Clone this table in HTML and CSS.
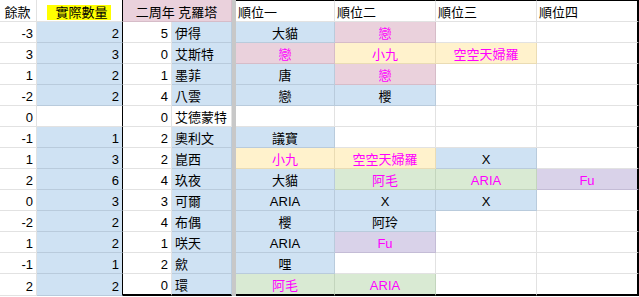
FILE: index.html
```html
<!DOCTYPE html>
<html lang="zh-Hant">
<head>
<meta charset="utf-8">
<link rel="stylesheet" href="styles.css">
</head>
<body>
<div class="sheet">
  <div class="bar"></div>

  <div class="c ctr hd">餘款</div>
  <div class="c ctr hd kb"><span class="hl">實際數量</span></div>
  <div class="c ctr hd pk span2">二周年 克羅塔</div>
  <div class="c hd top">順位一</div>
  <div class="c hd top">順位二</div>
  <div class="c hd top">順位三</div>
  <div class="c hd top lastcol">順位四</div>

  <!-- 1 -->
  <div class="c r">-3</div><div class="c r bl kb">2</div><div class="c r">5</div><div class="c bl">伊得</div>
  <div class="c ctr bl">大貓</div><div class="c ctr pk m">戀</div><div class="c"></div><div class="c lastcol"></div>
  <!-- 2 -->
  <div class="c r">3</div><div class="c r bl kb">3</div><div class="c r">0</div><div class="c bl">艾斯特</div>
  <div class="c ctr pk m">戀</div><div class="c ctr yl m">小九</div><div class="c ctr yl m">空空天婦羅</div><div class="c lastcol"></div>
  <!-- 3 -->
  <div class="c r">1</div><div class="c r bl kb">2</div><div class="c r">1</div><div class="c bl">墨菲</div>
  <div class="c ctr bl">唐</div><div class="c ctr pk m">戀</div><div class="c"></div><div class="c lastcol"></div>
  <!-- 4 -->
  <div class="c r">-2</div><div class="c r bl kb">2</div><div class="c r">4</div><div class="c bl">八雲</div>
  <div class="c ctr bl">戀</div><div class="c ctr bl">櫻</div><div class="c"></div><div class="c lastcol"></div>
  <!-- 5 -->
  <div class="c r">0</div><div class="c r kb"></div><div class="c r">0</div><div class="c">艾德蒙特</div>
  <div class="c"></div><div class="c"></div><div class="c"></div><div class="c lastcol"></div>
  <!-- 6 -->
  <div class="c r">-1</div><div class="c r bl kb">1</div><div class="c r">2</div><div class="c bl">奧利文</div>
  <div class="c ctr bl">議寶</div><div class="c"></div><div class="c"></div><div class="c lastcol"></div>
  <!-- 7 -->
  <div class="c r">1</div><div class="c r bl kb">3</div><div class="c r">2</div><div class="c bl">崑西</div>
  <div class="c ctr yl m">小九</div><div class="c ctr yl m">空空天婦羅</div><div class="c ctr bl">X</div><div class="c lastcol"></div>
  <!-- 8 -->
  <div class="c r">2</div><div class="c r bl kb">6</div><div class="c r">4</div><div class="c bl">玖夜</div>
  <div class="c ctr bl">大貓</div><div class="c ctr gr m">阿毛</div><div class="c ctr gr m">ARIA</div><div class="c ctr pu m lastcol">Fu</div>
  <!-- 9 -->
  <div class="c r">0</div><div class="c r bl kb">3</div><div class="c r">3</div><div class="c bl">可爾</div>
  <div class="c ctr bl">ARIA</div><div class="c ctr bl">X</div><div class="c ctr bl">X</div><div class="c lastcol"></div>
  <!-- 10 -->
  <div class="c r">-2</div><div class="c r bl kb">2</div><div class="c r">4</div><div class="c bl">布偶</div>
  <div class="c ctr bl">櫻</div><div class="c ctr bl">阿玲</div><div class="c"></div><div class="c lastcol"></div>
  <!-- 11 -->
  <div class="c r">1</div><div class="c r bl kb">2</div><div class="c r">1</div><div class="c bl">咲天</div>
  <div class="c ctr bl">ARIA</div><div class="c ctr pu m">Fu</div><div class="c"></div><div class="c lastcol"></div>
  <!-- 12 -->
  <div class="c r">-1</div><div class="c r bl kb">1</div><div class="c r">2</div><div class="c bl">歛</div>
  <div class="c ctr bl">哩</div><div class="c"></div><div class="c"></div><div class="c lastcol"></div>
  <!-- 13 -->
  <div class="c r">2</div><div class="c r bl kb">2</div><div class="c r bot">0</div><div class="c bl bot">環</div>
  <div class="c ctr gr m bot">阿毛</div><div class="c ctr gr m bot">ARIA</div><div class="c bot"></div><div class="c bot lastcol"></div>
</div>
</body>
</html>
```

FILE: styles.css
```css
html, body {
  margin: 0;
  padding: 0;
  background: #ffffff;
}

.sheet {
  display: grid;
  grid-template-columns: 37px 86px 49px 60px 4px 99px 101px 101px 102px;
  grid-template-rows: 22px repeat(12, 21px) 22px;
  font-family: "Liberation Sans", "Noto Sans CJK TC", sans-serif;
  font-size: 13px;
  line-height: 15px;
  color: #000000;
}

.bar {
  grid-column: 5;
  grid-row: 1 / -1;
  background: #c8c8c8;
}

.c {
  box-sizing: border-box;
  display: flex;
  align-items: flex-end;
  justify-content: flex-start;
  padding: 0 3px 1px 3px;
  border-right: 1px solid #e2e2e2;
  border-bottom: 1px solid #e2e2e2;
  white-space: nowrap;
  overflow: hidden;
  background: #ffffff;
}

.r { justify-content: flex-end; }
.ctr { justify-content: center; }

.hd { padding-left: 2px; }
.top { border-top: 1px solid #000000; }
.span2 { grid-column: span 2; }

.hl {
  background: #ffff00;
  padding: 0 3px 0 8px;
}

.kb { border-right-color: #000000; }
.lastcol { border-right: 2px solid #000000; }
.bot { border-bottom: 2px solid #000000; }

.bl { background: #cfe2f3; border-bottom-color: #b9cbdc; }
.bl:not(.kb) { border-right-color: #b9cbdc; }
.pk { background: #ead1dc; border-bottom-color: #d6bcc8; border-right-color: #d6bcc8; }
.yl { background: #fff2cc; border-bottom-color: #eadcb4; border-right-color: #eadcb4; }
.gr { background: #d9ead3; border-bottom-color: #c3d5bd; border-right-color: #c3d5bd; }
.pu { background: #d9d2e9; border-bottom-color: #c4bcd6; border-right-color: #c4bcd6; }
.lastcol.pu { border-right-color: #000000; }

.bot.pk, .bot.yl, .bot.gr, .bot.pu, .bot.bl { border-bottom-color: #000000; }

.m { color: #ff00ff; }
```
